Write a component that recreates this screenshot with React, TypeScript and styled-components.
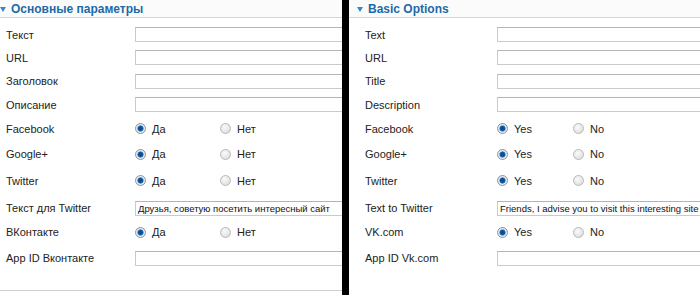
import React from "react";
import styled, { createGlobalStyle } from "styled-components";

const GlobalStyle = createGlobalStyle`
  html, body {
    margin: 0;
    padding: 0;
    background: #000;
  }
  body {
    font-family: "Liberation Sans", Arial, sans-serif;
  }
`;

const Page = styled.div`
  display: flex;
  gap: 7px;
  width: 700px;
  height: 295px;
  background: #000;
  overflow: hidden;
`;

const Panel = styled.section<{ $width: number }>`
  width: ${({ $width }) => $width}px;
  height: 100%;
  background: #fff;
  overflow: hidden;
  flex-shrink: 0;
`;

const Header = styled.div<{ $indent: number }>`
  display: flex;
  align-items: center;
  gap: 5px;
  height: 17px;
  padding-left: ${({ $indent }) => $indent}px;
  background: #fbfbfb;
  border-bottom: 1px solid #d6d6d6;
`;

const Arrow = styled.span`
  width: 0;
  height: 0;
  border-left: 3.5px solid transparent;
  border-right: 3.5px solid transparent;
  border-top: 5px solid #2b8ad0;
  margin-top: 1px;
`;

const Title = styled.h3`
  margin: 0;
  font-size: 12px;
  font-weight: bold;
  color: #1d6aa8;
`;

const Body = styled.div<{ $indent: number; $closed: boolean }>`
  padding: 5px 0 16px ${({ $indent }) => $indent}px;
  border-bottom: 1px solid ${({ $closed }) => ($closed ? "#cfcfcf" : "transparent")};
`;

const Row = styled.div<{ $h: number; $labelWidth: number }>`
  display: grid;
  grid-template-columns: ${({ $labelWidth }) => $labelWidth}px 1fr;
  align-items: center;
  height: ${({ $h }) => $h}px;
`;

const Label = styled.label`
  font-size: 11px;
  color: #222;
  white-space: nowrap;
`;

const TextField = styled.div`
  width: 260px;
  height: 13px;
  border: 1px solid #cacaca;
  border-top-color: #b4b4b4;
  background: #fff;
  font-size: 9.5px;
  line-height: 13px;
  color: #111;
  padding-left: 2px;
  white-space: nowrap;
  overflow: hidden;
`;

const Options = styled.div<{ $itemWidth: number }>`
  display: grid;
  grid-template-columns: ${({ $itemWidth }) => $itemWidth}px auto;
  align-items: center;
`;

const Option = styled.label`
  display: flex;
  align-items: center;
  gap: 6px;
  font-size: 11px;
  color: #222;
`;

const Radio = styled.span<{ $checked: boolean }>`
  display: inline-block;
  width: 9px;
  height: 9px;
  border-radius: 50%;
  border: 1px solid ${({ $checked }) => ($checked ? "#8596ab" : "#b9b9b9")};
  background: ${({ $checked }) =>
    $checked
      ? "radial-gradient(circle, #0e4f8d 0 2px, #3f7fbf 2.8px, #e4e9ef 3.4px)"
      : "radial-gradient(circle at 40% 35%, #fafafa 0, #e6e6e6 60%, #d2d2d2 100%)"};
`;

type Field =
  | { kind: "text"; label: string; h: number; value?: string }
  | { kind: "radio"; label: string; h: number };

type Locale = {
  title: string;
  yes: string;
  no: string;
  fields: Field[];
};

const heights = [23, 23, 24, 23, 25, 26, 27, 28, 20, 32];

const ru: Locale = {
  title: "Основные параметры",
  yes: "Да",
  no: "Нет",
  fields: [
    { kind: "text", label: "Текст", h: heights[0] },
    { kind: "text", label: "URL", h: heights[1] },
    { kind: "text", label: "Заголовок", h: heights[2] },
    { kind: "text", label: "Описание", h: heights[3] },
    { kind: "radio", label: "Facebook", h: heights[4] },
    { kind: "radio", label: "Google+", h: heights[5] },
    { kind: "radio", label: "Twitter", h: heights[6] },
    {
      kind: "text",
      label: "Текст для Twitter",
      h: heights[7],
      value: "Друзья, советую посетить интересный сайт",
    },
    { kind: "radio", label: "ВКонтакте", h: heights[8] },
    { kind: "text", label: "App ID Вконтакте", h: heights[9] },
  ],
};

const en: Locale = {
  title: "Basic Options",
  yes: "Yes",
  no: "No",
  fields: [
    { kind: "text", label: "Text", h: heights[0] },
    { kind: "text", label: "URL", h: heights[1] },
    { kind: "text", label: "Title", h: heights[2] },
    { kind: "text", label: "Description", h: heights[3] },
    { kind: "radio", label: "Facebook", h: heights[4] },
    { kind: "radio", label: "Google+", h: heights[5] },
    { kind: "radio", label: "Twitter", h: heights[6] },
    {
      kind: "text",
      label: "Text to Twitter",
      h: heights[7],
      value: "Friends, I advise you to visit this interesting site",
    },
    { kind: "radio", label: "VK.com", h: heights[8] },
    { kind: "text", label: "App ID Vk.com", h: heights[9] },
  ],
};

type PanelProps = {
  locale: Locale;
  width: number;
  headerIndent: number;
  bodyIndent: number;
  labelWidth: number;
  optionWidth: number;
  closed: boolean;
};

const OptionsPanel = ({
  locale,
  width,
  headerIndent,
  bodyIndent,
  labelWidth,
  optionWidth,
  closed,
}: PanelProps) => (
  <Panel $width={width}>
    <Header $indent={headerIndent}>
      <Arrow />
      <Title>{locale.title}</Title>
    </Header>
    <Body $indent={bodyIndent} $closed={closed}>
      {locale.fields.map((f) => (
        <Row key={f.label} $h={f.h} $labelWidth={labelWidth}>
          <Label>{f.label}</Label>
          {f.kind === "text" ? (
            <TextField>{f.value ?? ""}</TextField>
          ) : (
            <Options $itemWidth={optionWidth}>
              <Option>
                <Radio $checked />
                {locale.yes}
              </Option>
              <Option>
                <Radio $checked={false} />
                {locale.no}
              </Option>
            </Options>
          )}
        </Row>
      ))}
    </Body>
  </Panel>
);

export default function App() {
  return (
    <>
      <GlobalStyle />
      <Page>
        <OptionsPanel
          locale={ru}
          width={342}
          headerIndent={0}
          bodyIndent={6}
          labelWidth={129}
          optionWidth={85}
          closed
        />
        <OptionsPanel
          locale={en}
          width={351}
          headerIndent={8}
          bodyIndent={16}
          labelWidth={132}
          optionWidth={76}
          closed={false}
        />
      </Page>
    </>
  );
}
